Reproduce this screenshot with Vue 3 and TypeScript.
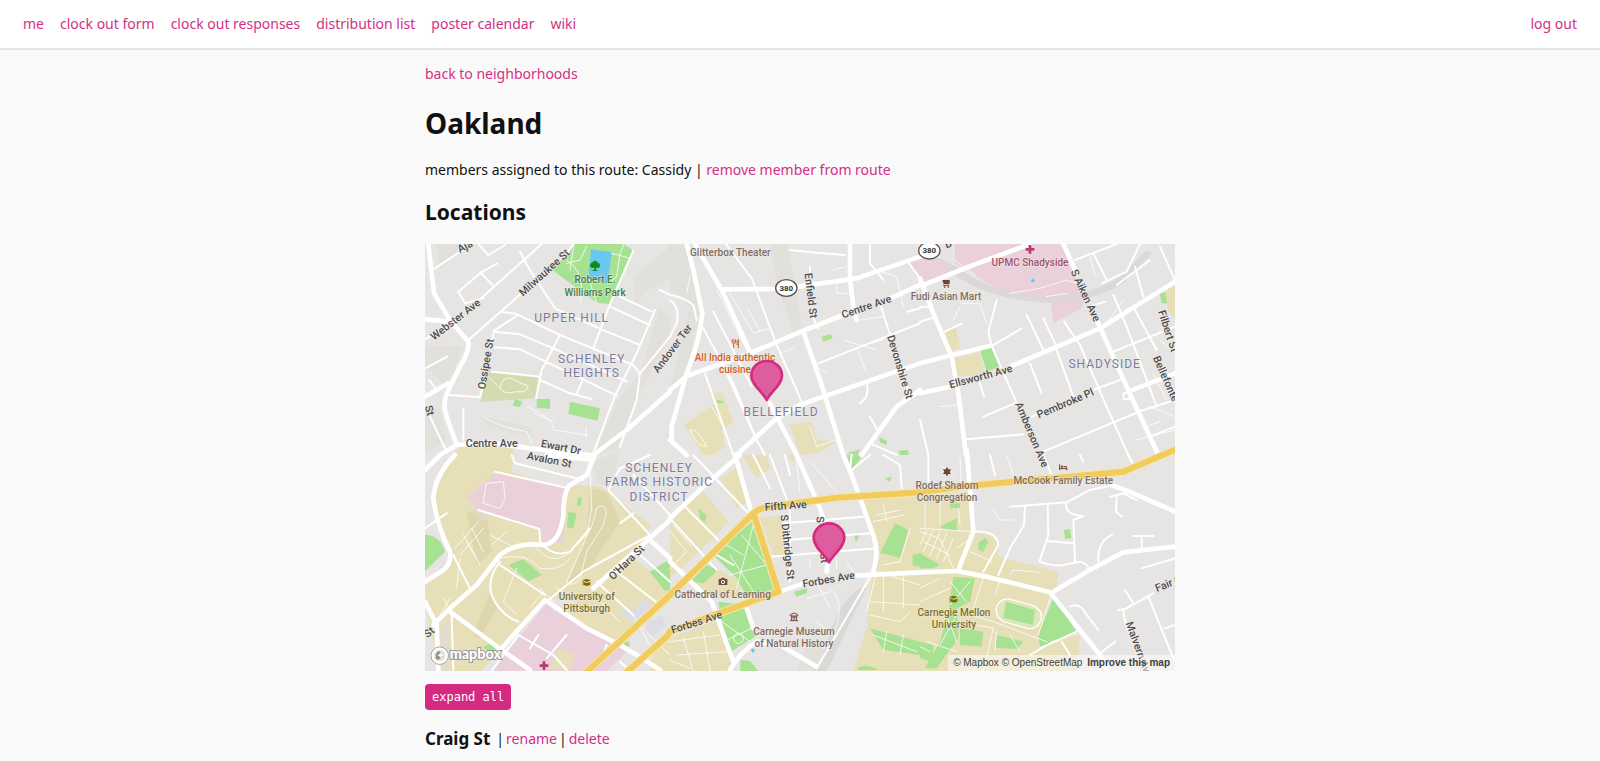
<script setup lang="ts">
interface Shape { kind: string; d: string }
interface Label { text: string; x: number; y: number; kind: string; turn?: number }
interface District {
  x: number
  y: number
  areas: Shape[]
  lane: string
  minor: string
  major: string
  highway: string
  labels: Label[]
}

const links = ['me', 'clock out form', 'clock out responses', 'distribution list', 'poster calendar', 'wiki']

const districts: District[] = [
  {
    x: -15, y: -12,
    areas: [
      { kind: 'hill', d: 'M750 20 Q690 70 640 110 L645 190 Q700 130 750 120ZM720 200 L750 230 V290 L650 480 L590 630 L520 645 L600 470 L660 400Z' },
      { kind: 'hill', d: 'M50 12 L130 12 L60 90ZM15 320 L130 320 L80 440 L15 380ZM15 500 L60 510 L80 600 L15 645ZM190 530 L330 560 L340 590 L200 560Z' },
      { kind: 'park', d: 'M462 12 L612 12 L640 32 L570 192 L530 188 L400 92Z' },
      { kind: 'water', d: 'M513 28 L575 36 L562 132 L505 112Z' },
      { kind: 'grass', d: 'M202 390 L355 412 L348 475 L182 486Z' },
      { kind: 'park', d: 'M284 478 l22 6 l-6 18 l-22 -5ZM350 477 h40 v30 l-40 -4ZM450 485 L540 505 L533 542 L445 522Z' },
      { kind: 'campus', d: 'M120 620 H278 V645 H108Z' }
    ],
    lane: 'M190 530 Q230 560 320 575 L335 610M320 500 Q400 530 400 570 L500 585M240 445 Q245 408 275 415 Q300 430 325 438 Q320 460 290 455 Q250 465 240 445M205 410 L240 445M440 60 Q500 100 480 185M462 12 L450 90M500 20 L480 60 L440 70M575 40 L632 55M562 132 L590 110L600 40L612 12M505 112 L530 188M345 520 L400 545M498 560 V590',
    minor: 'M15 298 L75 262M175 182 L365 12M115 155 L182 98 L232 70M182 98 L222 140M115 155 L135 190 L190 175M45 85 L135 25M175 12 L205 45 L255 15M148 298 L310 155M435 50 L460 12M300 35 L330 90 L405 205 L560 275 L660 315M243 215 L290 222 L420 285 L640 375 L660 400M290 228 L222 272 L215 310M222 275 L300 283 L400 325 L620 425M225 322 L300 328 L440 395 L590 467M215 395 L360 410M360 420 L450 460 L515 477M420 285 L365 390 L348 475M640 32 L570 192 L520 325M570 200 L690 255M600 170 L695 215M705 210 L650 340 L585 467 L520 640M490 415 L470 460M750 290 L660 400 L650 480 L600 620M720 150 L750 165M90 465 L180 472 L190 430M15 385 L82 350M28 420 L50 450M30 530 L75 625M130 505 V600',
    major: 'M25 12 L42 160 L90 240 L145 305 Q150 330 120 380 L85 450 Q65 490 80 530 L108 610M15 238 L90 245M15 470 L85 430M60 645 L110 615 L210 608 L330 625 L510 645M750 455 L620 570 L520 645',
    highway: '',
    labels: [
      { text: 'Aja', x: 140, y: 28, kind: 'street', turn: -28 },
      { text: 'Milwaukee St', x: 380, y: 106, kind: 'street', turn: -42 },
      { text: 'Webster Ave', x: 113, y: 247, kind: 'street', turn: -38 },
      { text: 'Ossipee St', x: 208, y: 374, kind: 'street', turn: -80 },
      { text: 'St', x: 18, y: 514, kind: 'street', turn: 75 },
      { text: 'Andover Ter', x: 766, y: 332, kind: 'street', turn: -53 },
      { text: 'Centre Ave', x: 215, y: 622, kind: 'street' },
      { text: 'Ewart Dr', x: 421, y: 632, kind: 'street', turn: 11 },
      { text: 'Avalon St', x: 386, y: 670, kind: 'street', turn: 11 },
      { text: 'Robert E.', x: 525, y: 130, kind: 'green' },
      { text: 'Williams Park', x: 525, y: 167, kind: 'green' },
      { text: 'UPPER HILL', x: 455, y: 245, kind: 'area' },
      { text: 'SCHENLEY', x: 515, y: 369, kind: 'area' },
      { text: 'HEIGHTS', x: 515, y: 412, kind: 'area' }
    ]
  },
  {
    x: 735, y: -12,
    areas: [
      { kind: 'hill', d: 'M0 12 H45 L90 210 L50 400 L0 445 L40 280 L60 200 L0 150ZM300 12 L350 12 L400 270 L370 275 L320 130Z' },
      { kind: 'park', d: 'M455 290 L483 282 L487 295 L460 305ZM628 590 l24 14 l-3 12 l-20 -10ZM685 632 l30 -2 v15 h-24ZM530 640 l40 -12 l-8 17Z' },
      { kind: 'campus', d: 'M42 555 L135 490 L130 460 L160 460 L190 550 L155 565 L165 620 L130 645 H100ZM360 555 L425 545 L440 600 L500 605 L440 640 L390 645Z' },
      { kind: 'park', d: 'M140 480 l20 2 l-2 8 l-16 -2Z' },
      { kind: 'clinic', d: 'M720 65 L750 55 V120Z' }
    ],
    lane: 'M180 160 L250 280 L300 265M140 150 L230 330M230 200 L270 275M490 90 L530 80M500 130 V160 L540 160M570 240 L640 230M60 570 Q80 620 110 620 Q80 560 60 570M125 500 L160 560M420 560 L440 620 L500 600M560 320 L590 400M600 310 L640 300M620 90 L680 110 L700 200M330 340 L370 325M440 380 L470 400M520 300 L620 330M60 110 L50 160',
    minor: 'M168 12 L245 115 L320 315 L380 450 L400 500M97 260 L190 430 L260 600 L285 645M130 215 L245 440M105 400 L190 645M170 400 L255 590M360 30 L440 38 L525 45M420 80 V110M430 235 L445 265M600 12 V70 L640 120M630 190 L665 300M445 370 L750 250M720 470 L700 400M590 430 Q600 470 570 490M710 60 L750 115M0 165 Q40 170 70 195 L80 240M0 180 Q30 200 20 250 L0 290M600 530 L625 575M600 610 L680 645M712 215 L750 205',
    major: 'M50 12 L70 90 L97 220 Q90 300 50 400 L5 560 V600M75 12 L155 150 L240 335M155 148 L310 147M385 140 L560 115 L750 50M540 12 V115 L550 200 L560 240M0 450 L50 408 L240 340 L400 272 L520 225M650 180 L750 135M400 275 L450 420 L520 645M200 645 L320 535 L390 495 L460 470 L750 370M300 490 L380 645M750 450 L680 500 L575 645M0 600 L50 645',
    highway: '',
    labels: [
      { text: 'Glitterbox Theater', x: 181, y: 48, kind: 'place' },
      { text: 'Enfield St', x: 412, y: 168, kind: 'street', turn: 83 },
      { text: 'Centre Ave', x: 593, y: 210, kind: 'street', turn: -19 },
      { text: 'Devonshire St', x: 680, y: 384, kind: 'street', turn: 73 },
      { text: 'All India authentic', x: 195, y: 362, kind: 'food' },
      { text: 'cuisine', x: 195, y: 398, kind: 'food' },
      { text: 'BELLEFIELD', x: 333, y: 527, kind: 'area' }
    ]
  },
  {
    x: 1485, y: -12,
    areas: [
      { kind: 'clinic', d: 'M0 55 L60 55 L105 90 L10 130 L0 125ZM105 12 H430 L490 185 L485 205 L400 250 L392 180 Q250 175 165 105 L105 70Z' },
      { kind: 'rail', d: 'M60 55 L110 80 Q220 165 380 172 Q520 165 600 110 L680 30 L695 40 L615 125 Q530 185 380 188 Q200 180 90 95Z' },
      { kind: 'campus', d: 'M75 275 L108 262 L120 325 L90 332ZM98 355 L180 338 L195 405 L108 408ZM735 150 L765 138 V235 L745 215Z' },
      { kind: 'park', d: 'M180 330 L215 322 L237 380 L200 395ZM718 160 L735 155 L742 190 L726 190Z' },
      { kind: 'water', d: 'M332 122 L338 115 L346 122 L338 128Z' }
    ],
    lane: 'M270 160 L360 145 L440 120 L470 130M105 60 L165 105M380 170 L440 160M125 190 L180 190 L200 250M120 200 L100 240M690 500 L765 530M650 600 L765 570M700 400 L740 480M510 50 L525 110M560 250 L610 180M60 500 L110 495M680 560 L720 545M720 300 L765 340',
    minor: 'M230 180 L205 275 L215 318 L305 265M215 318 L295 500M320 225 L370 330M370 235 L410 320M330 370 L365 460M432 245 L480 315 L560 500 L625 645M410 330 L460 470M580 165 L620 260 L710 500M640 200 L710 330M580 335 L765 260M520 450 L600 420M190 530 L290 488M140 598 L310 583M370 635 L670 510 L765 480M690 590 L765 560M465 60 L590 12M520 40 L560 120M545 130 L620 95 L660 12M590 135 L690 60M645 80 L670 170M720 20 L765 120M0 200 L30 200M0 245 L45 232M75 275 L125 250M180 430 L192 470M610 460 h18 v18 h-18ZM0 540 L25 645M335 530 L360 520M555 185 L510 200',
    major: 'M10 135 L160 75 L330 12M0 115 L40 220 L95 350 L115 460 L138 645M0 370 L95 345 L210 318M0 460 L90 440M275 378 L540 265 L765 125M430 12 L470 100M530 240 L620 440 L715 645M625 455 L765 400',
    highway: '',
    labels: [
      { text: 'UPMC Shadyside', x: 330, y: 78, kind: 'health' },
      { text: 'Fudi Asian Mart', x: 78, y: 179, kind: 'place' },
      { text: 'B', x: 88, y: 22, kind: 'street', turn: -20 },
      { text: 'S Aiken Ave', x: 487, y: 171, kind: 'street', turn: 65 },
      { text: 'Filbert St', x: 734, y: 276, kind: 'street', turn: 72 },
      { text: 'Bellefonte', x: 728, y: 420, kind: 'street', turn: 66 },
      { text: 'SHADYSIDE', x: 554, y: 384, kind: 'area' },
      { text: 'Ellsworth Ave', x: 185, y: 420, kind: 'street', turn: -15 },
      { text: 'Pembroke Pl', x: 440, y: 500, kind: 'street', turn: -23 },
      { text: 'Amberson Ave', x: 326, y: 588, kind: 'street', turn: 67 }
    ]
  },
  {
    x: -15, y: 633,
    areas: [
      { kind: 'campus', d: 'M110 -15 L280 -15 L275 50 L430 98 L470 90 L545 95 L690 210 L680 260 L520 400 L480 440 L370 430 L245 580 L185 648 H60 L15 450 V380 L90 310 L45 200 V90Z' },
      { kind: 'campus', d: 'M520 400 L640 310 L680 340 L750 405 V440 L560 570 L440 470Z' },
      { kind: 'campusDark', d: 'M510 100 L560 110 L600 200 L500 350 L440 390 L500 240ZM200 170 L215 290 L170 330 L140 170ZM215 400 L230 460 L180 550 L160 540Z' },
      { kind: 'hill', d: 'M520 20 L600 -15 L570 100 L530 80ZM140 150 L205 165 L210 200 L180 195ZM60 520 L90 480 V648 H60Z' },
      { kind: 'clinic', d: 'M380 445 L620 590 L560 648 H215ZM140 130 L225 55 L440 100 L430 260 L380 270 L355 220 L180 165Z' },
      { kind: 'park', d: 'M15 240 Q60 240 75 290 L15 348ZM265 330 L310 312 L365 360 L325 378ZM445 170 l25 5 l-10 45 l-20 -3ZM472 130 l14 -5 l-3 25 l-12 3ZM690 350 L740 318 L750 325 V405 L735 408ZM190 575 L215 565 L230 590 L205 592ZM610 565 l15 -8 l5 15 l-12 5Z' },
      { kind: 'building', d: 'M598 470 L620 455 L640 470 L670 430 L690 445 L685 480 L705 500 L650 515ZM690 500 L725 480 L740 510 L700 545L670 530ZM395 465 l8 -8 l8 8 l-8 10Z' },
      { kind: 'campus', d: 'M385 645 L415 580 L465 600 L450 645ZM700 580 L750 560 V648 H690Z' }
    ],
    lane: 'M350 280 Q390 330 440 300 L500 240M240 310 Q320 290 360 340 Q420 350 450 310M440 380 L520 200 L530 160 Q550 140 560 170 L550 210 L500 290 L480 370 Q460 400 440 380M200 85 L250 80 L255 130 L240 160 L190 145ZM105 280 L175 200M120 300 L190 220M140 260 L180 330M130 240 L170 310M155 220 L190 290M210 240 L270 270M215 270 L260 230M510 40 L515 160 L500 240M60 480 L90 430M70 430 L100 480M120 310 L110 400M640 480 L700 590M650 500 L750 600M360 400 L400 440M330 460 L370 410M290 340 L250 440L290 480M405 395 L440 420M540 440 L600 500',
    minor: 'M275 0 L285 25 L490 75M225 50 L445 100M175 165 L358 222 L360 260Q400 310 450 290 L510 220M15 220 L80 175M100 300 L150 400M240 320 Q200 370 215 420 Q240 480 295 500M240 330 L375 420M690 240 L490 350 L385 435M565 105 L690 240M600 205 L640 175M640 60 L750 180M295 540 L400 600 L440 645M295 540 L215 648M95 480 L100 645M380 610 L440 540M530 380 L640 480M590 350 L720 450M650 290 L750 380M330 580 L355 540M560 570 L540 620M600 620 L630 648M565 105 L600 40 L690 0',
    major: 'M105 0 Q45 60 40 130 Q50 210 90 290 Q95 325 70 345 L15 380M15 45 L60 0M40 510 L90 460 L170 390 L240 300 Q290 260 370 270 Q420 265 430 180 Q430 110 450 90 L500 60 L525 -5M380 0 L520 15M240 585 L375 435 L500 520 L600 570 L650 600 L720 645M90 470 L245 585 L330 645M15 440 L50 510 L55 645M520 400 L750 195M690 255 L750 310',
    highway: 'M490 660 L750 420M610 660 L740 545',
    labels: [
      { text: "O'Hara St", x: 627, y: 330, kind: 'street', turn: -44 },
      { text: 'St', x: 34, y: 540, kind: 'street', turn: -40 },
      { text: 'SCHENLEY', x: 717, y: 51, kind: 'area' },
      { text: 'FARMS HISTORIC', x: 717, y: 94, kind: 'area' },
      { text: 'DISTRICT', x: 717, y: 137, kind: 'area' },
      { text: 'University of', x: 500, y: 434, kind: 'school' },
      { text: 'Pittsburgh', x: 500, y: 470, kind: 'school' }
    ]
  },
  {
    x: 735, y: 633,
    areas: [
      { kind: 'campus', d: 'M0 190 L100 110 L175 200 L130 250 L0 370ZM150 70 L200 40 L240 140 L200 160ZM270 190 L335 180 L345 300 L310 300ZM215 0 H290 L300 40 L260 70ZM345 0 H380 L370 20ZM580 135 L750 110 V648 H550 L590 520 L600 390 L630 300 L600 210ZM0 550 L150 490 L185 600 V648 H0ZM60 380 L150 345 L215 380 L205 430 H130Z' },
      { kind: 'hill', d: 'M420 550 L480 600 L440 648 H380Z' },
      { kind: 'rail', d: 'M570 400 Q500 440 460 600 L430 648 H470 L590 400Z' },
      { kind: 'park', d: 'M245 200 L315 410 L230 425 L200 370 L130 300ZM60 380 L110 330 L145 345 L100 385ZM145 440 L230 450 L255 545 L175 595 L155 500ZM212 615 L240 618 L265 648 H210ZM630 295 L675 205 L715 225 L690 310 L660 300ZM372 410 L412 400 L410 415 L378 425ZM555 235 l12 8 l-5 15 l-8 -2ZM530 0 H580 L545 45ZM600 520 L750 560 V600 L640 585ZM560 645 Q580 620 625 645ZM728 300 L750 295 V335 L728 332ZM645 70 l20 -5 l-5 16ZM85 160 l25 22 l-5 20 l-14 -10Z' },
      { kind: 'water', d: 'M242 585 l6 -5 l8 6 l-7 8Z' }
    ],
    lane: 'M250 210 L200 400M290 330 L180 360M180 300 L250 410M215 240 L290 330M170 270 L220 300M155 500 L240 560M160 560 L245 520M205 530 m-15 20 a15 15 0 1 0 30 0 a15 15 0 1 0 -30 0M0 560 L150 540M20 600 L170 590M40 550 L70 648M100 530 L120 648M0 615 L60 640M590 470 L620 350 L750 390M600 440 L750 450M640 470 V350M700 350 V460M480 400 Q530 440 490 540L440 500M410 430 L480 410M620 180 L690 165M610 200 L700 180M640 150 L650 200M0 230 L50 290 L0 340M10 210 L65 275M420 310 V340M500 310 V340M530 320 L550 350M610 540 L740 590M650 530 L640 590M700 540 L690 600M600 480 L690 500 L720 470M720 220 L690 320 L640 330M440 380 L480 460M380 20 L390 110M420 20 L500 110',
    minor: 'M70 0 L240 180M40 150 L145 255M0 190 L140 345M300 0 L360 160 V380M340 205 L580 185M350 255 L600 235M300 305 L620 280M545 45 L600 0M640 0 L690 30 L695 100M140 300 L190 330M610 350 L440 640M250 0 L300 100M345 0 L360 60M545 0 L540 45',
    major: 'M210 0 L100 95 L0 190M195 0 L245 175M380 0 L450 160 L480 260 L470 350M330 410 L400 385M555 362 L750 352M0 320 L125 440 L150 510 L190 620M230 460 L250 520M180 645 Q210 590 260 560 L330 570 L440 635M520 0 L545 60 L610 240 Q628 290 610 350',
    highway: 'M0 420 L240 185 Q260 160 300 155 L500 128 L750 112M252 180 L325 410 L160 470 L0 530 L-10 545',
    labels: [
      { text: 'Fifth Ave', x: 348, y: 163, kind: 'street', turn: -4 },
      { text: 'S Dithridge St', x: 342, y: 277, kind: 'street', turn: 84 },
      { text: 'S Craig St', x: 446, y: 255, kind: 'street', turn: 84 },
      { text: 'Forbes Ave', x: 478, y: 384, kind: 'street', turn: -10 },
      { text: 'Forbes Ave', x: 83, y: 512, kind: 'street', turn: -18 },
      { text: 'Cathedral of Learning', x: 158, y: 430, kind: 'place' },
      { text: 'Carnegie Museum', x: 372, y: 539, kind: 'place' },
      { text: 'of Natural History', x: 372, y: 575, kind: 'place' }
    ]
  },
  {
    x: 1485, y: 633,
    areas: [
      { kind: 'campus', d: 'M0 120 L145 110 L160 230 L230 245 L235 305 L415 350 L410 400 L390 425 L360 560 L480 540 L470 648 H0Z' },
      { kind: 'park', d: 'M60 215 L110 190 V228 L75 222ZM90 145 h30 v15 h-30ZM175 265 L195 248 L205 260 L190 290 L175 285ZM432 225 L450 222 L455 250 L435 252ZM400 428 L470 530 L360 575 L355 540ZM100 365 L165 370 L150 440 L110 460 L115 550 L50 640 H15 L60 560 L85 470ZM0 295 L60 330 L40 340 H0ZM120 520 L190 530 L185 575 L120 570ZM230 540 L310 560 L290 582 L225 578ZM0 560 L40 570 L35 620 L0 610Z' },
      { kind: 'oval', d: 'M268 432 L340 452 Q372 468 362 498 Q350 525 322 520 L252 500 Q222 485 230 455 Q242 428 268 432Z' },
      { kind: 'park', d: 'M258 440 L345 465 L338 510 L250 488Z' }
    ],
    lane: 'M0 230 L60 250 L100 340M10 260 L90 300M20 225 L0 270M40 225 L10 290M60 230 L30 300M80 235 L50 310M100 250 L70 320M110 280 L150 250 M120 0 L125 100M60 140 V210M15 145 V215M115 160 L120 210M0 220 L160 230M0 440 L90 400M0 400 L60 370M90 380 L140 440M150 380 L90 450M80 480 L110 560M110 480 L60 570M20 560 L110 590M120 470 L220 500 L380 560M190 370 L160 460M225 420 L240 380M170 510 L220 520 L190 648M270 360 L280 345 L360 352M220 165 L240 195 L280 195M150 290 L215 320M390 430 L355 540M60 30 L100 60M260 0 L280 60M0 575 L30 590M230 530 L225 585 M270 540 L300 590',
    minor: 'M270 155 L440 142 L510 105 L580 90M315 155 L312 210 L270 280 L235 360M383 150 L385 240 L358 320 Q400 335 430 330 L480 320 Q510 330 505 345M380 258 L460 265M440 142 Q430 180 490 183 L460 195 L465 320M535 320 Q530 260 578 238M590 120 L588 170 L607 185M570 125 L610 115 L650 135M640 243 H700M665 243 V278M665 340 L765 310M595 465 L615 462 L700 415M615 405 L640 445M610 465 Q610 500 640 560M685 425 L760 610M735 520 L765 510M450 455 Q480 440 500 480 L535 525M360 580 L470 530M540 595 L585 560M330 600 L400 560M425 560 L450 600M160 230 Q230 225 235 270 L190 350M25 0 V80M370 0 L395 60M210 0 L225 60M480 0 L490 20M625 0 L640 30',
    major: 'M140 -15 L150 100 L160 230 L115 345M0 352 L110 348 L200 365 L390 412 L540 600 L565 648M400 410 L500 350 L610 292 L765 275M575 90 L640 115 L765 170M710 -10 L718 10',
    highway: 'M0 112 L120 95 L610 50 L780 -22',
    labels: [
      { text: 'Rodef Shalom', x: 81, y: 102, kind: 'place' },
      { text: 'Congregation', x: 81, y: 139, kind: 'place' },
      { text: 'McCook Family Estate', x: 430, y: 87, kind: 'place' },
      { text: 'Carnegie Mellon', x: 102, y: 484, kind: 'school' },
      { text: 'University', x: 102, y: 520, kind: 'school' },
      { text: 'Fair Oaks', x: 773, y: 386, kind: 'street', turn: -22 },
      { text: 'Malvern Ave', x: 647, y: 588, kind: 'street', turn: 70 }
    ]
  }
]

const shields = [{ x: 1084, y: 132 }, { x: 1513, y: 20 }]
const pins = [{ x: 1025, y: 474 }, { x: 1212, y: 961 }]
</script>

<template>
  <header class="topbar">
    <nav class="nav">
      <a v-for="link in links" :key="link" href="#">{{ link }}</a>
    </nav>
    <a href="#">log out</a>
  </header>
  <main class="page">
    <a href="#" class="back">back to neighborhoods</a>
    <h1>Oakland</h1>
    <p>members assigned to this route: Cassidy | <a href="#">remove member from route</a></p>
    <h2>Locations</h2>
    <div class="map">
      <svg class="canvas" viewBox="0 0 2250 1281" role="img" aria-label="Map of Oakland">
        <g v-for="(t, i) in districts" :key="'a' + i" :transform="`translate(${t.x} ${t.y})`">
          <path v-for="(s, j) in t.areas" :key="j" :d="s.d" :class="s.kind" />
        </g>
        <g v-for="(t, i) in districts" :key="'r' + i" :transform="`translate(${t.x} ${t.y})`" class="roads">
          <path :d="t.lane" class="lane" />
          <path :d="t.minor" class="minor" />
          <path :d="t.major" class="major" />
        </g>
        <g v-for="(t, i) in districts" :key="'h' + i" :transform="`translate(${t.x} ${t.y})`" class="roads">
          <path v-if="t.highway" :d="t.highway" class="casing" />
        </g>
        <g v-for="(t, i) in districts" :key="'y' + i" :transform="`translate(${t.x} ${t.y})`" class="roads">
          <path v-if="t.highway" :d="t.highway" class="highway" />
        </g>
        <g v-for="(t, i) in districts" :key="'t' + i" :transform="`translate(${t.x} ${t.y})`">
          <text
            v-for="l in t.labels" :key="l.text + l.x" :x="l.x" :y="l.y" :class="['label', l.kind]"
            :transform="l.turn ? `rotate(${l.turn} ${l.x} ${l.y})` : undefined"
          >{{ l.text }}</text>
        </g>
        <g v-for="s in shields" :key="s.x">
          <ellipse :cx="s.x" :cy="s.y" rx="32" ry="25" class="shield" />
          <text :x="s.x" :y="s.y + 8" class="shield-text">380</text>
        </g>
        <g fill="#158a12">
          <circle cx="503" cy="64" r="8" /><circle cx="517" cy="64" r="8" />
          <circle cx="510" cy="58" r="8" /><rect x="508" y="66" width="5" height="14" /><rect x="503" y="78" width="14" height="3" />
        </g>
        <path d="M1811 3h8v9h9v8h-9v9h-8v-9h-9v-8h9ZM353 1252h8v9h9v8h-9v9h-8v-9h-9v-8h9Z" fill="#b9386e" />
        <path d="M922 286v8q0 4 4 4v14M927 286v10M932 286v8q0 4-4 4M940 312v-25q-5 6-4 15h4" fill="none" stroke="#cf5f2b" stroke-width="3" />
        <path d="M1552 108h22v12h-18ZM1554 122h19v3h-19ZM1557 127h4v4h-4ZM1568 127h4v4h-4Z" fill="#6f4436" />
        <path d="M1566 669l4 7h8l-4 7l4 7h-8l-4 7l-4-7h-8l4-7l-4-7h8Z" fill="#6f4436" />
        <path d="M1904 661v17M1904 674h22v5M1909 666h4v4h-4ZM1916 668h8v5" fill="none" stroke="#6f4436" stroke-width="3" />
        <g fill="#806a00">
          <path d="M472 1009l12-4 14 4-12 5ZM477 1014l8 3 11-3v9l-11 3-8-3ZM473 1012h3v12h-3Z" />
          <path d="M1573 1059l12-4 14 4-12 5ZM1578 1064l8 3 11-3v9l-11 3-8-3ZM1574 1062h3v12h-3Z" />
        </g>
        <path d="M881 1005h6l3-4h8l3 4h6v18h-26Z" fill="#6f4f3c" />
        <circle cx="894" cy="1014" r="5" fill="none" stroke="#fff" stroke-width="3" />
        <path d="M1096 1116v-4l11-5 11 5v4ZM1098 1119h18M1100 1119v9M1107 1119v9M1114 1119v9M1095 1130h24" fill="none" stroke="#6f4436" stroke-width="3" />
        <g v-for="p in pins" :key="p.x" :transform="`translate(${p.x} ${p.y})`">
          <path d="M0 -6C-12 -30 -46 -52 -46 -79A46 44 0 0 1 46 -79C46 -52 12 -30 0 -6Z" class="pin" />
        </g>
        <g>
          <circle cx="44" cy="1235" r="26" fill="#e4e3d8" stroke="#999" stroke-width="3" />
          <circle cx="44" cy="1235" r="21" fill="none" stroke="#fff" stroke-width="7" />
          <path d="M33 1246Q30 1224 42 1222A12 12 0 1 1 33 1246Z" fill="#8e8e8e" />
          <path d="M46 1225l3 6 6 3-6 3-3 6-3-6-6-3 6-3Z" fill="#fff" />
          <text x="74" y="1246" class="wordmark">mapbox</text>
        </g>
      </svg>
      <div class="credits">
        <a href="#">© Mapbox</a> <a href="#">© OpenStreetMap</a> <a href="#" class="improve">Improve this map</a>
      </div>
    </div>
    <button type="button">expand all</button>
    <div class="location">
      <h3>Craig St</h3>
      <span>|</span>
      <a href="#">rename</a>
      <span>|</span>
      <a href="#">delete</a>
    </div>
  </main>
</template>

<style>
body {
  margin: 0;
  background: #fafafa;
}
</style>

<style scoped>
.topbar,
.page {
  font: 14px/24px "Noto Sans", sans-serif;
  color: #111;
}
a {
  color: #d42f85;
  text-decoration: none;
}
.topbar {
  display: flex;
  justify-content: space-between;
  padding: 12px 23px;
  background: #fff;
  border-bottom: 2px solid #e5e5e5;
}
.nav {
  display: flex;
  gap: 16px;
}
.page {
  box-sizing: border-box;
  max-width: 750px;
  margin: 0 auto;
  padding-top: 12px;
}
.back {
  display: block;
}
h1 {
  margin: 20px 0 18px;
  font-size: 28px;
  line-height: 34px;
}
p {
  margin: 0 0 15px;
}
h2 {
  margin: 0 0 17px;
  font-size: 21px;
  line-height: 30px;
}
.map {
  position: relative;
  overflow: hidden;
}
.canvas {
  display: block;
  width: 100%;
  background: #e6e5e3;
}
.hill { fill: #dddcd5; opacity: .6; }
.park { fill: #a6e292; }
.grass { fill: #d5dbb1; }
.water { fill: #69c8ef; }
.campus { fill: #e6dfb8; }
.campusDark { fill: #d9d1a3; opacity: .6; }
.clinic { fill: #e9d0db; }
.rail { fill: #dad9d7; }
.building { fill: #dedde6; }
.oval { fill: #dfe6bb; stroke: #fff; stroke-width: 4; }
.roads {
  fill: none;
  stroke: #fff;
  stroke-linecap: round;
  stroke-linejoin: round;
}
.lane { stroke-width: 3; opacity: .8; }
.minor { stroke-width: 6; }
.major { stroke-width: 14; }
.casing { stroke: #f6e6b4; stroke-width: 24; }
.highway { stroke: #f1cc5c; stroke-width: 18; }
.label {
  font-family: Roboto, sans-serif;
  font-size: 30px;
  font-weight: 500;
  text-anchor: middle;
  paint-order: stroke;
  stroke: #f3f1ec;
  stroke-width: 4px;
  stroke-opacity: .6;
  stroke-linejoin: round;
}
.street {
  fill: #4c4b4d;
  font-size: 32px;
}
.place { fill: #806c63; }
.green { fill: #4c7a45; }
.food { fill: #cf5f2b; }
.health { fill: #a6506f; }
.school { fill: #80702c; }
.area {
  fill: #7a7ba3;
  font-size: 36px;
  font-weight: 400;
  letter-spacing: 3px;
}
.shield { fill: #fff; stroke: #555; stroke-width: 4; }
.shield-text {
  fill: #333;
  font: bold 24px Roboto, sans-serif;
  text-anchor: middle;
}
.pin { fill: #dd5d9f; stroke: #d42b81; stroke-width: 8; stroke-linejoin: round; }
.wordmark {
  font: 900 43px Lato, sans-serif;
  fill: #fff;
  paint-order: stroke;
  stroke: #999;
  stroke-width: 6px;
}
.credits {
  position: absolute;
  right: 0;
  bottom: 0;
  padding: 0 5px;
  background: rgba(255, 255, 255, .5);
  font: 10px/16px "Liberation Sans", Arial, sans-serif;
}
.credits a {
  color: #404040;
}
.credits .improve {
  margin-left: 2px;
  font-weight: bold;
}
button {
  display: block;
  margin: 13px 0 17px;
  padding: 4px 7px;
  border: 0;
  border-radius: 4px;
  background: #d42b81;
  color: #fff;
  font: 12px/18px "DejaVu Sans Mono", monospace;
}
.location {
  display: flex;
  gap: 2px;
}
h3 {
  margin: 0 4px 0 0;
  font-size: 17px;
  line-height: 24px;
}
</style>
